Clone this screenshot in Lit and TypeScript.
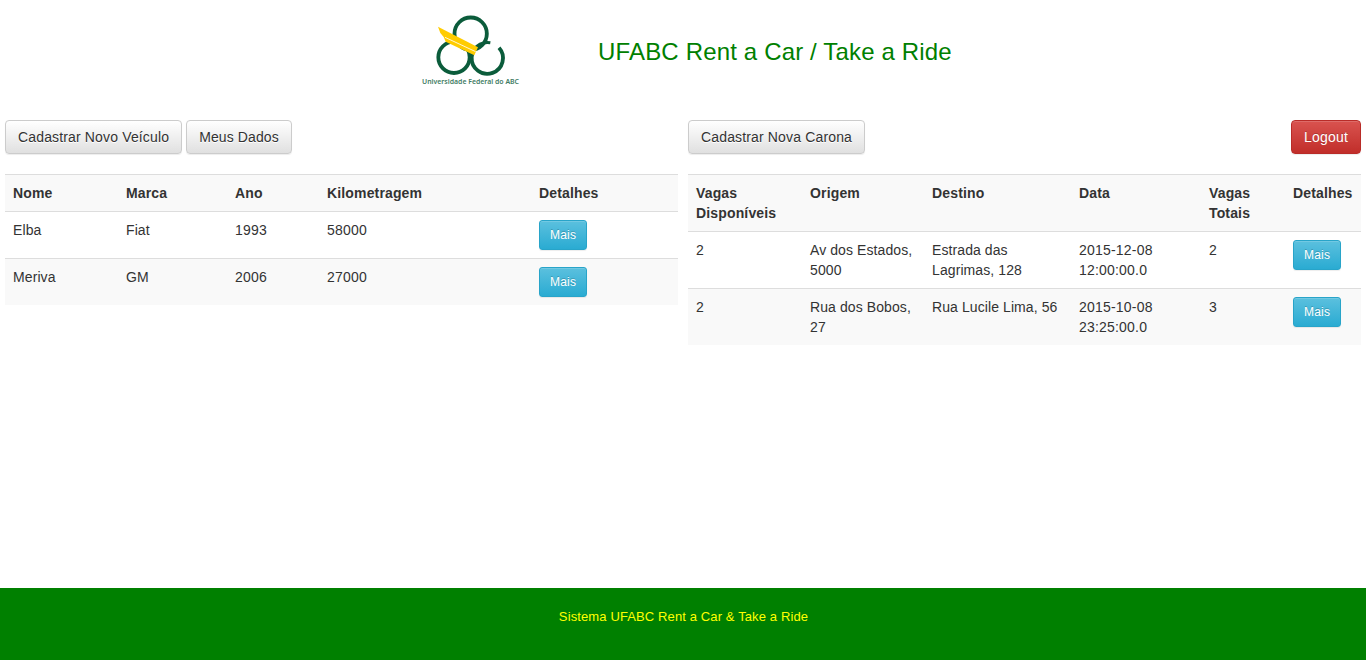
import { LitElement, html, css, svg } from "lit";
import { customElement, property } from "lit/decorators.js";
import { classMap } from "lit/directives/class-map.js";

const vehicles = [
  ["Elba", "Fiat", "1993", "58000"],
  ["Meriva", "GM", "2006", "27000"],
];

const rides = [
  ["2", "Av dos Estados, 5000", "Estrada das Lagrimas, 128", "2015-12-08 12:00:00.0", "2"],
  ["2", "Rua dos Bobos, 27", "Rua Lucile Lima, 56", "2015-10-08 23:25:00.0", "3"],
];

const buttonStyles = css`
  button {
    box-sizing: border-box;
    display: block;
    margin: 0;
    height: 34px;
    padding: 0 12px;
    border: 1px solid #ccc;
    border-radius: 4px;
    font: 14px/20px "Liberation Sans", Arial, sans-serif;
    letter-spacing: 0.15px;
    white-space: nowrap;
    color: #333;
    text-shadow: 0 1px 0 #fff;
    background: linear-gradient(#fff, #e0e0e0);
    box-shadow: inset 0 1px 0 rgba(255, 255, 255, 0.15), 0 1px 1px rgba(0, 0, 0, 0.075);
  }
  .tight {
    letter-spacing: 0.1px;
  }
  .danger {
    letter-spacing: 0.2px;
    color: #fff;
    text-shadow: 0 -1px 0 rgba(0, 0, 0, 0.2);
    border-color: #b92c28;
    background: linear-gradient(#d9534f, #c12e2a);
  }
  .info {
    height: 30px;
    padding: 0 10px;
    font-size: 12px;
    line-height: 18px;
    letter-spacing: 0.2px;
    border-radius: 3px;
    color: #fff;
    text-shadow: 0 -1px 0 rgba(0, 0, 0, 0.2);
    border-color: #28a4c9;
    background: linear-gradient(#5bc0de, #2aabd2);
  }
`;

@customElement("data-table")
class DataTable extends LitElement {
  @property({ attribute: false }) heads: string[] = [];
  @property({ attribute: false }) rows: string[][] = [];
  @property({ attribute: false }) widths: number[] = [];

  static styles = [
    buttonStyles,
    css`
      :host {
        display: block;
      }
      table {
        width: 100%;
        table-layout: fixed;
        border-collapse: separate;
        border-spacing: 0;
      }
      th,
      td {
        padding: 8px;
        border-top: 1px solid #ddd;
        text-align: left;
        vertical-align: top;
        font-size: 14px;
        line-height: 20px;
      }
      th {
        letter-spacing: 0.15px;
      }
      td {
        letter-spacing: 0.09px;
      }
      td.numeric {
        letter-spacing: 0.2px;
      }
      tr:nth-child(odd) {
        background: #f9f9f9;
      }
    `,
  ];

  render() {
    return html`<table>
      <colgroup>${this.widths.map((w) => html`<col style="width:${w}px" />`)}</colgroup>
      <tbody>
        <tr>${this.heads.map((h) => html`<th>${h}</th>`)}</tr>
        ${this.rows.map(
          (r) => html`<tr>${r.map(
            (c) => html`<td class=${classMap({ numeric: /^\d/.test(c) })}>${c}</td>`
          )}<td><button class="info">Mais</button></td></tr>`
        )}
      </tbody>
    </table>`;
  }
}

const logo = svg`
  <g fill="none" stroke="#0b5c3b" stroke-width="11.5">
    <circle cx="182" cy="86" r="48.5"/>
    <circle cx="132" cy="157" r="47"/>
    <path d="M267 128A47 47 0 1 1 185 157Q185 141 195 129"/>
    <path d="M191 133Q212 108 241 113" stroke-width="9"/>
  </g>
  <path d="M84 65L204 127L193 151L107 110L101 96L91 84Z" fill="#fc0"/>
  <path d="M105 97L197 140" stroke="#fff" stroke-width="2.5"/>
  <text x="36" y="237" textLength="291" lengthAdjust="spacingAndGlyphs" class="caption">Universidade Federal do ABC</text>`;

@customElement("app-root")
class AppRoot extends LitElement {
  static styles = [
    buttonStyles,
    css`
      :host {
        display: flex;
        flex-direction: column;
        height: 100vh;
        color: #333;
        background: #fff;
        font: 14px/20px "Liberation Sans", Arial, sans-serif;
      }
      header {
        display: flex;
        height: 120px;
        padding-left: 410px;
        box-sizing: border-box;
      }
      .logo {
        width: 120px;
        height: 90px;
        margin-top: 5px;
      }
      .caption {
        font: 600 19px "Noto Sans", "Open Sans", sans-serif;
        fill: #3f7c63;
      }
      h1 {
        margin: 38px 0 0 68px;
        font-size: 24px;
        line-height: 27px;
        font-weight: 400;
        letter-spacing: 0.16px;
        color: green;
        white-space: nowrap;
      }
      main {
        flex: 1;
        display: grid;
        grid-template-columns: 673px 673px;
        gap: 10px;
        padding: 0 5px;
        align-items: start;
      }
      .bar {
        display: flex;
        gap: 4px;
        margin-bottom: 20px;
      }
      .bar .danger {
        margin-left: auto;
      }
      footer {
        height: 72px;
        box-sizing: border-box;
        padding: 19px 0 0 1px;
        text-align: center;
        font-size: 13px;
        letter-spacing: 0.12px;
        background: green;
        color: #ff0;
      }
    `,
  ];

  render() {
    return html`
      <header>
        <svg class="logo" viewBox="0 0 360 270">${logo}</svg>
        <h1>UFABC Rent a Car / Take a Ride</h1>
      </header>
      <main>
        <section>
          <div class="bar">
            <button>Cadastrar Novo Veículo</button>
            <button class="tight">Meus Dados</button>
          </div>
          <data-table
            .heads=${["Nome", "Marca", "Ano", "Kilometragem", "Detalhes"]}
            .rows=${vehicles}
            .widths=${[113, 109, 92, 212, 147]}
          ></data-table>
        </section>
        <section>
          <div class="bar">
            <button>Cadastrar Nova Carona</button>
            <button class="danger">Logout</button>
          </div>
          <data-table
            .heads=${["Vagas Disponíveis", "Origem", "Destino", "Data", "Vagas Totais", "Detalhes"]}
            .rows=${rides}
            .widths=${[114, 122, 147, 130, 84, 76]}
          ></data-table>
        </section>
      </main>
      <footer>Sistema UFABC Rent a Car &amp; Take a Ride</footer>
    `;
  }
}
